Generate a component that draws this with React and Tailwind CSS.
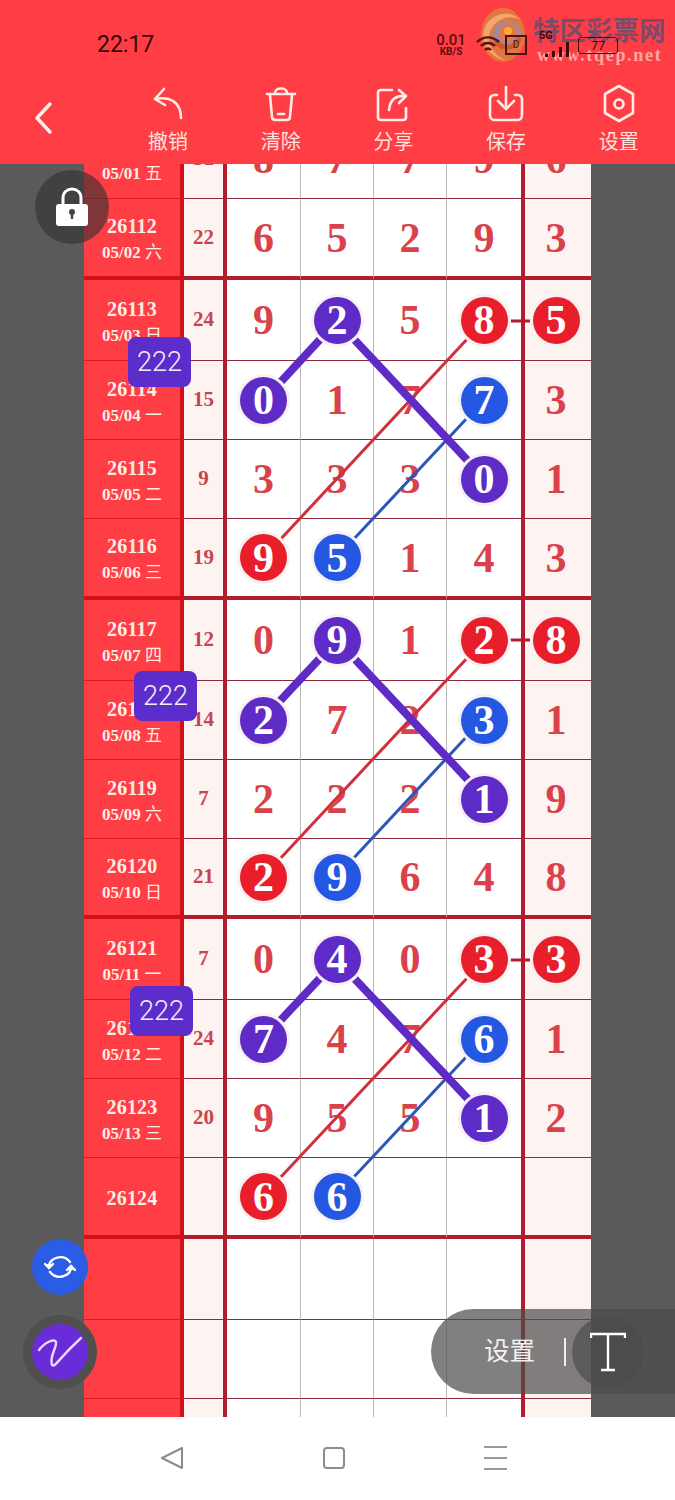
const SERIF = { fontFamily: '"Liberation Serif","Noto Sans CJK SC",serif' };
const SANS = { fontFamily: 'Roboto,"Noto Sans CJK SC",sans-serif' };

const rows = [
  { id: '26111', date: '05/01', wd: '五', iss: '31', d: [8, 7, 7, 9, 6], h: 'h-[80px]' },
  { id: '26112', date: '05/02', wd: '六', iss: '22', d: [6, 5, 2, 9, 3], thick: true, h: 'h-[81px]' },
  { id: '26113', date: '05/03', wd: '日', iss: '24', d: [9, 2, 5, 8, 5], m: { 1: 'p', 3: 'r', 4: 'r' }, h: 'h-[81px]' },
  { id: '26114', date: '05/04', wd: '一', iss: '15', d: [0, 1, 7, 7, 3], m: { 0: 'p', 3: 'b' }, h: 'h-[79px]' },
  { id: '26115', date: '05/05', wd: '二', iss: '9', d: [3, 3, 3, 0, 1], m: { 3: 'p' }, h: 'h-[79px]' },
  { id: '26116', date: '05/06', wd: '三', iss: '19', d: [9, 5, 1, 4, 3], m: { 0: 'r', 1: 'b' }, thick: true, h: 'h-[81px]' },
  { id: '26117', date: '05/07', wd: '四', iss: '12', d: [0, 9, 1, 2, 8], m: { 1: 'p', 3: 'r', 4: 'r' }, h: 'h-[81px]' },
  { id: '26118', date: '05/08', wd: '五', iss: '14', d: [2, 7, 2, 3, 1], m: { 0: 'p', 3: 'b' }, h: 'h-[79px]' },
  { id: '26119', date: '05/09', wd: '六', iss: '7', d: [2, 2, 2, 1, 9], m: { 3: 'p' }, h: 'h-[79px]' },
  { id: '26120', date: '05/10', wd: '日', iss: '21', d: [2, 9, 6, 4, 8], m: { 0: 'r', 1: 'b' }, thick: true, h: 'h-[80px]' },
  { id: '26121', date: '05/11', wd: '一', iss: '7', d: [0, 4, 0, 3, 3], m: { 1: 'p', 3: 'r', 4: 'r' }, h: 'h-[81px]' },
  { id: '26122', date: '05/12', wd: '二', iss: '24', d: [7, 4, 7, 6, 1], m: { 0: 'p', 3: 'b' }, h: 'h-[79px]' },
  { id: '26123', date: '05/13', wd: '三', iss: '20', d: [9, 5, 5, 1, 2], m: { 3: 'p' }, h: 'h-[79px]' },
  { id: '26124', date: '', wd: '', iss: '', d: [6, 6, '', '', ''], m: { 0: 'r', 1: 'b' }, thick: true, h: 'h-[81px]' },
  { id: '', date: '', wd: '', iss: '', d: ['', '', '', '', ''], h: 'h-[81px]' },
  { id: '', date: '', wd: '', iss: '', d: ['', '', '', '', ''], h: 'h-[79px]' },
  { id: '', date: '', wd: '', iss: '', d: ['', '', '', '', ''], h: 'h-[79px]' },
];

const ballColor = { p: 'bg-[#5f2bc6]', r: 'bg-[#e81f2b]', b: 'bg-[#2457e2]' };

function Value({ v, mark }) {
  if (v === '') return null;
  if (mark) {
    return (
      <span className={`relative z-20 flex h-[47px] w-[47px] items-center justify-center rounded-full ${ballColor[mark]} text-[42px] font-bold leading-none text-white ring-[3px] ring-[#f7f1f3]`} style={SERIF}>
        {v}
      </span>
    );
  }
  return <span className="text-[42px] font-bold leading-none text-[#d9414b]" style={SERIF}>{v}</span>;
}

function Row({ r }) {
  const line = r.thick ? 'border-b-4 border-b-[#b31c2d]' : 'border-b-[1.5px] border-b-[#8c2a3a]';
  const dateLine = r.thick ? 'border-b-4 border-b-[#d2101c]' : 'border-b-[1.5px] border-b-[#d91c28]';
  return (
    <div className={`grid grid-cols-[100px_43px_74px_73px_73px_78px_66px] ${r.h}`}>
      <div className={`flex flex-col items-center justify-center border-r-4 border-r-[#d2101c] bg-[#ff3d44] pt-[3px] text-[#fdeee6] ${dateLine}`} style={SERIF}>
        {r.id && <span className="text-[20px] font-bold leading-[26px] tracking-[0.2px]">{r.id}</span>}
        {r.date && (
          <span className="mt-[2px] text-[17px] leading-[24px]">
            <span className="font-bold">{r.date}</span> <span className="font-normal">{r.wd}</span>
          </span>
        )}
      </div>
      <div className={`flex items-center justify-center border-r-[4px] border-r-[#b31c2d] bg-[#fdf3f0] text-[21px] font-bold text-[#c9434e] ${line}`} style={SERIF}>
        {r.iss}
      </div>
      {[0, 1, 2].map((i) => (
        <div key={i} className={`flex items-center justify-center border-r border-r-[#bdb8b8] bg-white ${line}`}>
          <Value v={r.d[i]} mark={r.m && r.m[i]} />
        </div>
      ))}
      <div className={`flex items-center justify-center border-r-[4px] border-r-[#b31c2d] bg-white ${line}`}>
        <Value v={r.d[3]} mark={r.m && r.m[3]} />
      </div>
      <div className={`flex items-center justify-center bg-[#fdf3f0] pr-1 ${line}`}>
        <Value v={r.d[4]} mark={r.m && r.m[4]} />
      </div>
    </div>
  );
}

function Chart() {
  const groups = [
    [321, 400, 478, 557],
    [640, 718, 797, 876],
    [960, 1038, 1116, 1195],
  ];
  return (
    <svg className="pointer-events-none absolute left-0 top-0 z-10" width="507" height="1340" viewBox="84 119 507 1340" fill="none">
      {groups.map(([a, b, c, e], i) => (
        <g key={i}>
          <line x1="484" y1={a} x2="264" y2={e} stroke="#d0303c" strokeWidth="3" />
          <line x1="484" y1={b} x2="337" y2={e} stroke="#2a58b8" strokeWidth="3" />
          <polyline points={`264,${b} 337,${a} 484,${c}`} stroke="#5f2bc6" strokeWidth="8" />
          <line x1="510" y1={a} x2="530" y2={a} stroke="#b31c2d" strokeWidth="3" />
        </g>
      ))}
    </svg>
  );
}

function Badge({ className }) {
  return (
    <div className={`absolute z-30 flex h-[50px] w-[63px] items-center justify-center rounded-lg bg-[#5c2dcb] text-[27px] font-light text-[#f4eefc] ${className}`} style={SANS}>
      222
    </div>
  );
}

function ToolItem({ label, children }) {
  return (
    <div className="flex w-[113px] flex-col items-center">
      <svg width="40" height="40" viewBox="0 0 40 40" fill="none" stroke="#fdeee8" strokeWidth="2.6" strokeLinecap="round" strokeLinejoin="round">
        {children}
      </svg>
      <span className="mt-[5px] text-[20px] leading-[26px] text-[#fde4de]" style={SANS}>{label}</span>
    </div>
  );
}

function Logo() {
  return (
    <svg className="absolute left-[476px] top-[8px] opacity-85" width="54" height="54" viewBox="0 0 54 54" fill="none">
      <ellipse cx="27" cy="27" rx="22" ry="27" fill="#e0803c" />
      <path d="M8 22C12 6 34 0 44 12C34 6 20 10 14 24C10 36 18 48 30 52C18 52 4 38 8 22Z" fill="#f2b878" />
      <circle cx="31" cy="27" r="14" fill="#8d9ab0" />
      <circle cx="32" cy="25" r="9" fill="#e8803a" />
      <circle cx="32" cy="23" r="4" fill="#f5c040" />
      <path d="M20 32C24 42 38 42 44 30" stroke="#c8602c" strokeWidth="5" />
    </svg>
  );
}

export default function App() {
  return (
    <div className="flex h-[1500px] w-[675px] flex-col overflow-hidden bg-white" style={SANS}>
      <header className="relative z-40 h-[164px] shrink-0 bg-[#ff3d45]">
        <div className="flex h-[84px] items-start pt-[31px]">
          <span className="ml-[97px] text-[23px] leading-[28px] text-[#320608]">22:17</span>
          <Logo />
          <div className="absolute left-[533px] top-[15px] text-[26.5px] font-bold leading-[28px] text-[#7d4a68]" style={{ fontFamily: '"Noto Sans CJK SC",sans-serif' }}>特区彩票网</div>
          <div className="absolute left-[537px] top-[45px] text-[18px] font-bold leading-[20px] tracking-[1.7px] text-[#ffa9a4]" style={{ fontFamily: '"Liberation Serif",serif' }}>www.tqep.net</div>
          <div className="relative z-10 ml-auto mr-[57px] flex h-[28px] items-center">
            <div className="flex w-[30px] flex-col items-center text-[#5a0c10]">
              <span className="text-[15px] font-medium leading-[14px]">0.01</span>
              <span className="text-[10px] font-bold leading-[10px]">KB/S</span>
            </div>
            <svg className="ml-[9px]" width="26" height="22" viewBox="0 0 26 22" fill="none" stroke="#5a1014" strokeWidth="2.4">
              <path d="M2 8C9 2 17 2 24 8M6 12C10 8 16 8 20 12M10 16C12 14 14 14 16 16" />
            </svg>
            <div className="ml-[4px] flex h-[20px] w-[22px] items-center justify-center border-2 border-[#4a1418] text-[10px] leading-none text-[#4a1418]">D</div>
            <div className="relative ml-[10px] h-[26px] w-[33px]">
              <span className="absolute left-[2px] top-[-2px] text-[11px] font-bold leading-none text-[#3c0a0c]">5G</span>
              <svg className="absolute bottom-0 right-0" width="26" height="16" viewBox="0 0 26 16" fill="#3c0a0c">
                <rect x="1" y="12" width="3" height="3" /><rect x="8" y="9" width="3" height="6" /><rect x="15" y="5" width="3" height="10" /><rect x="22" y="0" width="3" height="15" />
              </svg>
            </div>
            <div className="ml-[8px] flex h-[17px] w-[40px] items-center justify-center rounded-[3px] border-[1.5px] border-[#3c0a0c] text-[13px] leading-none text-[#3c0a0c]">77</div>
          </div>
        </div>
        <div className="flex items-start">
          <div className="w-[112px] pl-[32px] pt-[16px]">
            <svg width="24" height="36" viewBox="0 0 24 36" fill="none" stroke="#fdf0ec" strokeWidth="3.4" strokeLinecap="round" strokeLinejoin="round">
              <path d="M18 4L5 18L18 32" />
            </svg>
          </div>
          <ToolItem label="撤销">
            <path d="M16 5L7 15L17 21" />
            <path d="M7 15C22 12 33 18 33 34" />
          </ToolItem>
          <ToolItem label="清除">
            <path d="M6 10H34" />
            <path d="M14 9C14 3 26 3 26 9" />
            <path d="M9 11L11 33C11 35 13 36 15 36H25C27 36 29 35 29 33L31 11" />
            <path d="M17 30H23" />
          </ToolItem>
          <ToolItem label="分享">
            <path d="M19 6H8C6 6 5 7 5 9V33C5 35 6 36 8 36H30C32 36 33 35 33 33V24" />
            <path d="M26 6L33 12L26 19" />
            <path d="M33 12C22 11 17 16 16 26" />
          </ToolItem>
          <ToolItem label="保存">
            <path d="M11 11H8C6 11 4 13 4 15V31C4 34 6 36 8 36H32C34 36 36 34 36 31V15C36 13 34 11 32 11H29" />
            <path d="M20 3V24" />
            <path d="M12 17L20 25L28 17" />
          </ToolItem>
          <ToolItem label="设置">
            <path d="M20 2L34 10V29L20 37L6 29V10Z" />
            <circle cx="20" cy="20" r="4.5" />
          </ToolItem>
        </div>
      </header>

      <main className="relative h-[1253px] shrink-0 overflow-hidden bg-[#5a5a5a]">
        <div className="relative ml-[84px] mt-[-45px] w-[507px]">
          <Chart />
          {rows.map((r, i) => <Row key={i} r={r} />)}
        </div>

        <Badge className="left-[128px] top-[173px]" />
        <Badge className="left-[134px] top-[507px]" />
        <Badge className="left-[130px] top-[822px]" />

        <div className="absolute left-[35px] top-[6px] z-30 flex h-[74px] w-[74px] items-center justify-center rounded-full bg-[rgba(50,50,50,0.62)]">
          <svg width="36" height="42" viewBox="0 0 36 42">
            <path d="M9 18V12C9 0 27 0 27 12V18" fill="none" stroke="#fff" strokeWidth="3" />
            <rect x="2" y="18" width="32" height="22" rx="3" fill="#fff" />
            <circle cx="18" cy="26" r="3" fill="#444" />
            <rect x="16.8" y="27" width="2.4" height="6" fill="#444" />
          </svg>
        </div>

        <div className="absolute left-[32px] top-[1075px] z-30 flex h-[56px] w-[56px] items-center justify-center rounded-full bg-[#2b5ce6]">
          <svg width="32" height="28" viewBox="0 0 32 28" fill="none" stroke="#fff" strokeWidth="2.4" strokeLinecap="round">
            <path d="M5 13C6 5 19 0 26 9" />
            <path d="M27 15C26 23 13 28 6 19" />
            <path d="M1 11L5 15L9 11" fill="#fff" />
            <path d="M23 17L27 13L31 17" fill="#fff" />
          </svg>
        </div>

        <div className="absolute left-[23px] top-[1151px] z-30 flex h-[74px] w-[74px] items-center justify-center rounded-full bg-[#4f4f4f]">
          <div className="flex h-[56px] w-[56px] items-center justify-center rounded-full bg-[#6a2bd8]">
            <svg width="46" height="36" viewBox="0 0 46 36" fill="none" stroke="#ecd8f8" strokeWidth="2.4" strokeLinecap="round" strokeLinejoin="round">
              <path d="M2 16C8 8 18 4 19 8C20 14 12 22 15 31C18 34 20 26 44 4" />
            </svg>
          </div>
        </div>

        <div className="absolute right-0 top-[1145px] z-30 flex h-[85px] w-[244px] items-center rounded-l-full bg-[rgba(76,76,76,0.71)]">
          <span className="ml-[53px] text-[25.5px] leading-none text-[#f4f0f0]">设置</span>
          <span className="ml-[29px] h-[28px] w-[2px] bg-[#eee]" />
          <div className="ml-[6px] flex h-[72px] w-[72px] items-center justify-center rounded-full bg-[rgba(74,74,74,0.67)]">
            <svg width="36" height="40" viewBox="0 0 36 40" fill="none" stroke="#fff" strokeWidth="2.4">
              <path d="M1 6V2H35V6M18 2V38M11 38H25" />
            </svg>
          </div>
        </div>
      </main>

      <nav className="flex flex-1 items-center bg-white pb-[1px]">
        <div className="flex w-[338px] justify-end pr-[154px]">
          <svg width="24" height="24" viewBox="0 0 24 24" fill="none" stroke="#8c8c8c" strokeWidth="2" strokeLinejoin="round">
            <path d="M22 2V22L2 12Z" />
          </svg>
        </div>
        <div className="ml-[-15px] h-[22px] w-[22px] rounded-[4px] border-2 border-[#8c8c8c]" />
        <div className="ml-[139px] flex h-[24px] w-[23px] flex-col justify-between">
          <span className="h-[2px] bg-[#999]" />
          <span className="h-[2px] bg-[#999]" />
          <span className="h-[2px] bg-[#999]" />
        </div>
      </nav>
    </div>
  );
}
